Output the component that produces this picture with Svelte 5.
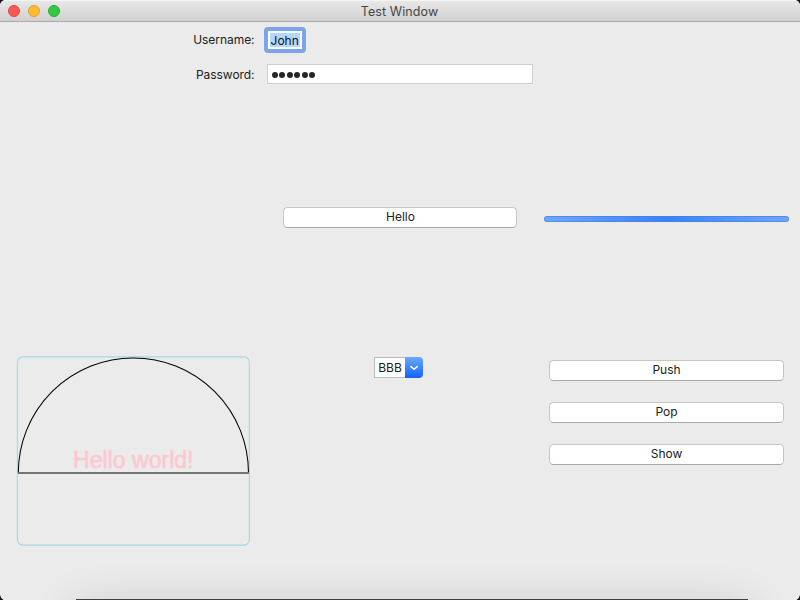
<script>
  const actions = ['Push', 'Pop', 'Show'];
</script>

<div class="window">
  <header>
    <span class="light red"></span>
    <span class="light yellow"></span>
    <span class="light green"></span>
    <h1>Test Window</h1>
  </header>

  <main>
    <section class="form">
      <div class="row">
        <span class="label user">Username:</span>
        <div class="name"><span>John</span></div>
      </div>
      <div class="row second">
        <span class="label pass">Password:</span>
        <div class="password">
          {#each Array(6) as _}<i></i>{/each}
        </div>
      </div>
    </section>

    <section class="middle">
      <button class="hello"><span>Hello</span></button>
      <div class="progress"></div>
    </section>

    <section class="bottom">
      <svg class="canvas" width="234" height="190" viewBox="16 356 234 190">
        <rect x="17.4" y="356.9" width="232" height="188.2" rx="5.5" fill="none" stroke="#a5d8ea" stroke-width="1.1" />
        <path d="M18.3 473A115.1 115.1 0 0 1 248.5 473" fill="none" stroke="#000" stroke-width="1.05" />
        <path d="M18 473H249" stroke="#747474" stroke-width="2" />
        <text x="73" y="468" textLength="120.5">Hello world!</text>
      </svg>
      <div class="combo">
        <span>BBB</span>
        <div class="arrow">
          <svg width="18" height="21" viewBox="0 0 18 21">
            <path d="M6 9.6L9.1 12.3L12.2 9.6" fill="none" stroke="#fff" stroke-width="1.5" stroke-linecap="round" stroke-linejoin="round" />
          </svg>
        </div>
      </div>
      <div class="actions">
        {#each actions as action}
          <button><span>{action}</span></button>
        {/each}
      </div>
    </section>
  </main>

  <div class="dock"></div>
  <svg class="corners" width="800" height="600" viewBox="0 0 800 600">
    <path d="M0 0H4Q1 1 0 4ZM800 0H796Q799 1 800 4ZM0 600V595Q.7 598.5 3.5 600ZM800 600V595Q799.3 598.5 796.5 600Z" fill="#15121a" />
  </svg>
</div>

<style>
  .window {
    position: relative;
    width: 800px;
    height: 600px;
    overflow: hidden;
    background: #ebebeb;
    color: #202020;
    font: 12px/16px Inter, "Liberation Sans", sans-serif;
    display: flex;
    flex-direction: column;
  }
  header {
    box-sizing: border-box;
    height: 22px;
    flex: none;
    display: flex;
    align-items: center;
    gap: 8px;
    padding: 0 8px;
    background: linear-gradient(#e8e8e8, #d0d0d0);
    border-top: 1px solid #f4f4f4;
    border-bottom: 1px solid #ababab;
  }
  .light {
    box-sizing: border-box;
    width: 12px;
    height: 12px;
    border-radius: 50%;
    border: 1px solid;
  }
  .red { background: #fc5753; border-color: #df4744; }
  .yellow { background: #fdbc2f; border-color: #dea032; }
  .green { background: #34c841; border-color: #27aa35; }
  h1 {
    flex: 1;
    margin: 2px 61px 0 0;
    text-align: center;
    font: 400 12.5px/16px Inter, sans-serif;
    letter-spacing: 0.1px;
    color: #464646;
  }
  main {
    flex: 1;
    display: flex;
    flex-direction: column;
  }
  .form { height: 185px; }
  .row {
    display: flex;
    align-items: flex-start;
    height: 36px;
  }
  .row.second { height: 33px; }
  .label {
    width: 254.5px;
    margin-top: 10px;
    text-align: right;
    letter-spacing: -0.05px;
  }
  .second .label { margin-top: 9px; }
  .name {
    box-sizing: border-box;
    width: 42px;
    height: 26px;
    margin: 4.5px 0 0 9.2px;
    padding: 2px;
    border: 4px solid #7ba4eb;
    border-radius: 4px;
    background: #fff;
    color: #111;
  }
  .name span {
    display: block;
    height: 14px;
    line-height: 15px;
    text-align: center;
    background: #b3d7ff;
  }
  .password {
    box-sizing: border-box;
    display: flex;
    align-items: center;
    gap: 1.6px;
    width: 266px;
    height: 20px;
    margin: 6px 0 0 12.5px;
    padding: 1px 0 0 3.5px;
    background: #fff;
    border: 1px solid #d0d0d0;
  }
  .password i {
    width: 6px;
    height: 6px;
    border-radius: 50%;
    background: #262626;
  }
  button {
    box-sizing: border-box;
    display: flex;
    justify-content: center;
    align-items: center;
    width: 235px;
    height: 21px;
    margin: 0;
    padding: 0 0 2px;
    border: 1px solid #c6c6c6;
    border-bottom-color: #a9a9a9;
    border-radius: 4.5px;
    background: #fff;
    color: #202020;
    font: inherit;
  }
  .middle {
    display: flex;
    align-items: flex-start;
    height: 149px;
    padding-left: 283px;
  }
  .hello { width: 234px; padding-left: 1px; }
  .progress {
    box-sizing: border-box;
    width: 245px;
    height: 6px;
    margin: 9px 0 0 27px;
    border-radius: 3px;
    border: 1px solid #4b7fd4aa;
    background: linear-gradient(90deg, #6ea7ff, #3982fc 50%, #6ea7ff) border-box;
  }
  .bottom {
    display: flex;
    align-items: flex-start;
    padding-left: 16px;
  }
  .canvas { display: block; }
  .canvas text {
    font: 23px "Liberation Sans", Arial, sans-serif;
    fill: #ffc7d1;
    stroke: #ffc7d1;
    stroke-width: 0.5;
  }
  .combo {
    display: flex;
    width: 49px;
    height: 21px;
    margin: 1px 0 0 124px;
  }
  .combo span {
    box-sizing: border-box;
    width: 31px;
    border: 1px solid #bcbcbc;
    border-right: 0;
    background: #fff;
    line-height: 20px;
    text-align: center;
  }
  .arrow {
    width: 18px;
    border-radius: 0 4px 4px 0;
    background: linear-gradient(#6ba8fa, #1264fb);
  }
  .arrow svg { display: block; }
  .actions {
    display: flex;
    flex-direction: column;
    gap: 21px;
    margin: 4px 0 0 126px;
  }
  .dock {
    position: absolute;
    left: 76px;
    top: 599px;
    width: 672px;
    height: 40px;
    background: #444144;
    box-shadow: 0 8px 46px rgba(0, 0, 0, 0.16);
  }
  .corners {
    position: absolute;
    inset: 0;
    pointer-events: none;
  }
</style>
